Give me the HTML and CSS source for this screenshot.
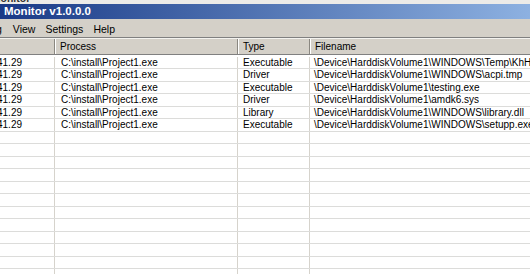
FILE: index.html
```html
<!DOCTYPE html>
<html lang="en">
  <head>
    <link rel="stylesheet" href="styles.css">
    <title>Monitor</title>
  </head>
  <body>
    <div class="window">
      <div class="top-strip"><span>Process Monitor</span></div>
      <div class="titlebar">Monitor v1.0.0.0</div>
      <div class="menubar">
        <span class="menu-item cut">g</span>
        <span class="menu-item">View</span>
        <span class="menu-item">Settings</span>
        <span class="menu-item">Help</span>
      </div>
      <div class="list">
        <div class="list-head">
          <div class="head-cell first"></div>
          <div class="head-cell">Process</div>
          <div class="head-cell">Type</div>
          <div class="head-cell last">Filename</div>
        </div>
        <div class="list-body" id="rows"></div>
      </div>
    </div>

    <script>
      const rows = [
        ["C:\\install\\Project1.exe", "Executable", "\\Device\\HarddiskVolume1\\WINDOWS\\Temp\\KhH3.tmp"],
        ["C:\\install\\Project1.exe", "Driver", "\\Device\\HarddiskVolume1\\WINDOWS\\acpi.tmp"],
        ["C:\\install\\Project1.exe", "Executable", "\\Device\\HarddiskVolume1\\testing.exe"],
        ["C:\\install\\Project1.exe", "Driver", "\\Device\\HarddiskVolume1\\amdk6.sys"],
        ["C:\\install\\Project1.exe", "Library", "\\Device\\HarddiskVolume1\\WINDOWS\\library.dll"],
        ["C:\\install\\Project1.exe", "Executable", "\\Device\\HarddiskVolume1\\WINDOWS\\setupp.exe"]
      ];

      const fillRows = function () {
        const body = document.getElementById("rows");
        for (let i = 0; i < 18; i++) {
          const r = rows[i];
          const row = document.createElement("div");
          row.className = "row";
          if (r) {
            row.innerHTML =
              `<div class='cell time'>41.29</div>` +
              `<div class='cell proc'>${r[0]}</div>` +
              `<div class='cell type'>${r[1]}</div>` +
              `<div class='cell file'>${r[2]}</div>`;
          } else {
            row.innerHTML =
              "<div class='cell time'></div><div class='cell proc'></div>" +
              "<div class='cell type'></div><div class='cell file'></div>";
          }
          body.appendChild(row);
        }
      };

      fillRows();
    </script>
  </body>
</html>
```

FILE: styles.css
```css
html,
body {
  margin: 0;
  padding: 0;
  overflow: hidden;
}
body {
  font-family: "Liberation Sans", Arial, sans-serif;
  font-size: 10px;
  color: #000;
  background: #fff;
}
.window {
  width: 530px;
  height: 274px;
  display: flex;
  flex-direction: column;
  overflow: hidden;
}
.top-strip {
  height: 4px;
  overflow: hidden;
  background: #ecebe8;
}
.top-strip span {
  display: block;
  margin-top: -8px;
  margin-left: -52px;
  font-weight: bold;
  font-size: 10.5px;
  color: #333;
}
.titlebar {
  height: 15px;
  line-height: 15px;
  padding-left: 4px;
  background: linear-gradient(to right, #193a87, #8db1e1);
  color: #fff;
  font-weight: bold;
  font-size: 11.5px;
  white-space: nowrap;
}
.menubar {
  height: 18px;
  display: flex;
  align-items: center;
  background: #d4d0c8;
  padding-top: 1px;
  box-sizing: border-box;
  font-size: 10.5px;
}
.menu-item {
  padding: 0 5px;
}
.menu-item.cut {
  margin-left: -9px;
  padding-right: 6px;
}
.list {
  flex: 1;
  border-top: 1px solid #808080;
  display: flex;
  flex-direction: column;
  overflow: hidden;
}
.list-head {
  display: grid;
  grid-template-columns: 55px 183px 72px 1fr;
  height: 17px;
  background: #d4d0c8;
  border-top: 1px solid #f4f3ef;
  border-bottom: 1px solid #808080;
  box-sizing: border-box;
}
.head-cell {
  line-height: 15px;
  padding-left: 5px;
  border-right: 1px solid #8a8780;
  box-shadow: inset 1px 0 0 #fff;
  white-space: nowrap;
}
.head-cell.first {
  box-shadow: none;
}
.head-cell.last {
  border-right: none;
  padding-left: 5px;
}
.list-body {
  padding-top: 1.8px;
}
.row {
  display: grid;
  grid-template-columns: 55px 183px 72px 1fr;
  height: 12.5px;
  box-sizing: border-box;
  border-bottom: 1px solid #dcdcda;
}
.cell {
  line-height: 11px;
  white-space: nowrap;
  overflow: hidden;
  border-right: 1px solid #d6d3cc;
}
.cell.time {
  text-indent: -3px;
}
.cell.proc {
  padding-left: 6px;
}
.cell.type {
  padding-left: 5px;
}
.cell.file {
  padding-left: 4px;
  border-right: none;
}
```
